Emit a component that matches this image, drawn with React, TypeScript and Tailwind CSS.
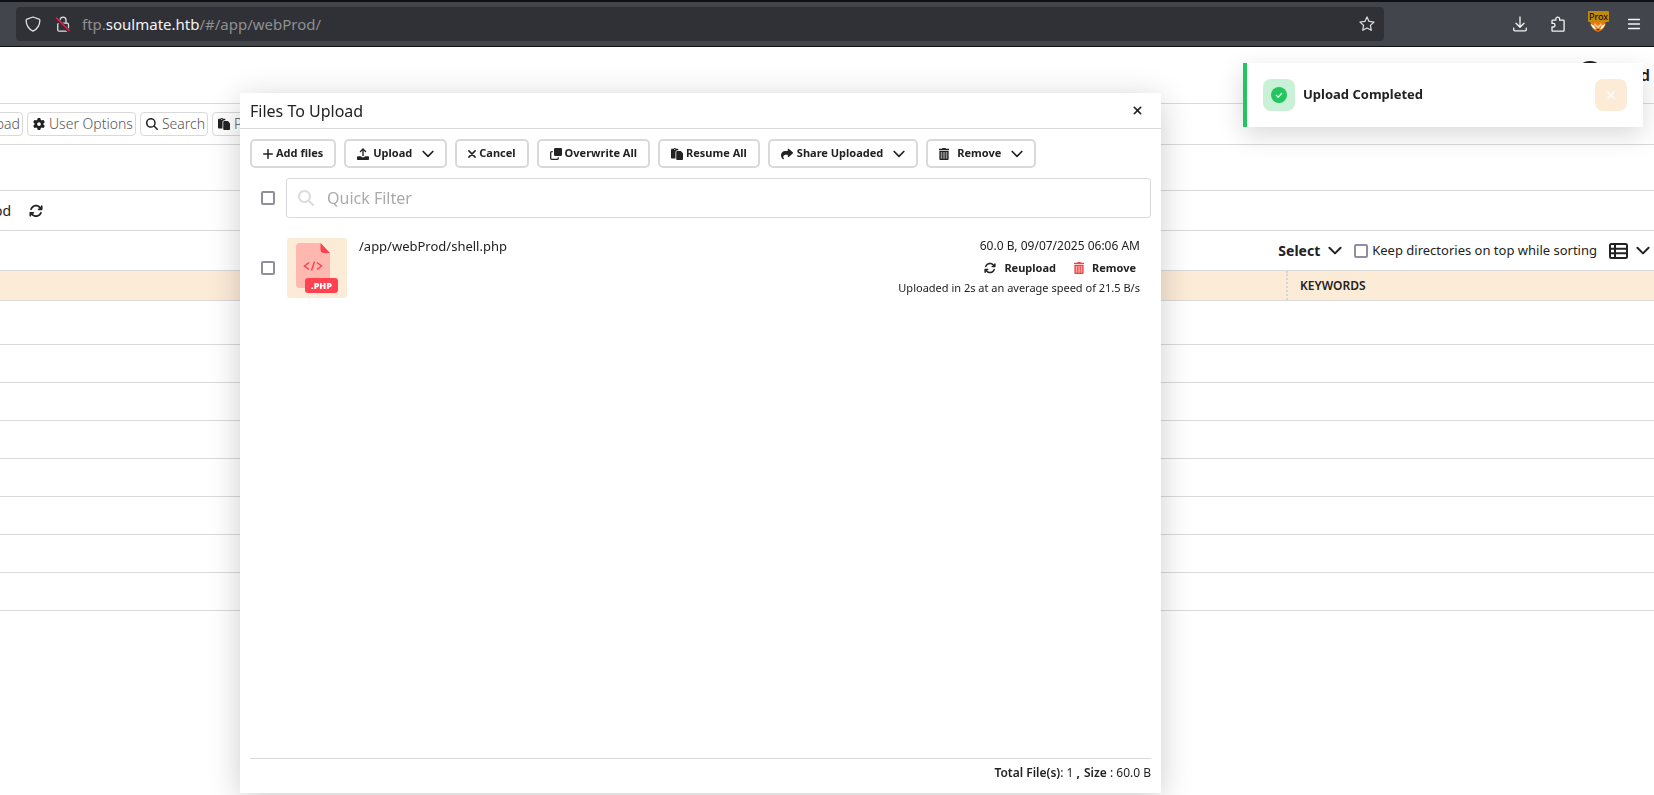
import type { ReactNode } from "react";
import {
  FaArrowsRotate,
  FaCircleUser,
  FaGear,
  FaMagnifyingGlass,
  FaPaste,
  FaShare,
  FaXmark,
} from "react-icons/fa6";

function ShieldIcon() {
  return (
    <svg className="size-4" viewBox="0 0 16 16" fill="none" stroke="#e0e0e4" strokeWidth="1.3" strokeLinejoin="round">
      <path d="M8 1 2 3.2c-.5.2-.9.6-.9 1.200C1.300 9 3.300 13 8 15.200c4.700-2.200 6.700-6.200 6.900-10.800 0-.6-.4-1-.9-1.200L8 1z" />
    </svg>
  );
}

function InsecureIcon() {
  return (
    <svg className="size-4" viewBox="0 0 16 16" fill="none" strokeWidth="1.3">
      <path d="M5 7.200V4.200a3 3 0 0 1 6 0v3" stroke="#e0e0e4" />
      <rect x="2.700" y="7.200" width="10.800" height="8" rx="1.500" stroke="#e0e0e4" />
      <path d="M1 2.500 14.500 15.500" stroke="#303136" strokeWidth="3.500" />
      <path d="M1 1.500 14.500 15" stroke="#f0184c" strokeWidth="1.400" />
    </svg>
  );
}

function StarIcon() {
  return (
    <svg className="size-4" viewBox="0 0 16 16" fill="none" stroke="#e0e0e4" strokeWidth="1.2" strokeLinejoin="round">
      <path d="m8 .9 2.100 4.500 4.900.6-3.600 3.400.9 4.900L8 12l-4.300 2.300.9-4.900L1 6l4.900-.6z" />
    </svg>
  );
}

function DownloadIcon() {
  return (
    <svg className="size-4" viewBox="0 0 16 16" fill="none" stroke="#f4f4f6" strokeWidth="1.3" strokeLinecap="round" strokeLinejoin="round">
      <path d="M8 1v10M4 7.200 8 11.200l4-4M1.700 12.200v1.300c0 .8.5 1.300 1.300 1.300h10c.8 0 1.300-.5 1.300-1.300v-1.300" />
    </svg>
  );
}

function ExtensionIcon() {
  return (
    <svg className="size-4" viewBox="0 0 16 16" fill="none" stroke="#f4f4f6" strokeWidth="1.3" strokeLinejoin="round">
      <path d="M2 6.200V4.900c0-.4.3-.7.700-.7h3.100V3a1.900 1.900 0 0 1 3.800 0v1.200h3.800c.4 0 .7.300.7.700v9.600c0 .4-.3.700-.7.700H2.700c-.4 0-.7-.3-.7-.7V11h1.200a1.800 1.800 0 0 0 0-3.600H2z" />
    </svg>
  );
}

function MenuIcon() {
  return (
    <svg className="size-4" viewBox="0 0 16 16" fill="none" stroke="#f4f4f6" strokeWidth="1.300" strokeLinecap="round">
      <path d="M2.500 3.500h11M2.500 8h11M2.500 12.500h11" />
    </svg>
  );
}

function FoxIcon() {
  return (
    <svg className="size-4" viewBox="0 0 16 16">
      <path d="M0 4h16l-1 6-3 4-4 2-4-2-3-4z" fill="#e87b0c" />
      <path d="M.5 8 4 9.500l2 4-3-1.500zM15.500 8 12 9.500l-2 4 3-1.500z" fill="#fff" />
      <path d="M5 7l3 3 3-3 1 2-4 3.500L4 9z" fill="#f6c48a" />
      <path d="M6.500 13h3L8 15z" fill="#5b2b05" />
    </svg>
  );
}

function Chevron({ className = "w-3" }: { className?: string }) {
  return (
    <svg className={className} viewBox="0 0 12 8" fill="none" stroke="currentColor" strokeWidth="1.700" strokeLinecap="round" strokeLinejoin="round">
      <path d="M1.200 1.500 6 6.300l4.800-4.800" />
    </svg>
  );
}

function PlusIcon() {
  return (
    <svg className="size-[10px]" viewBox="0 0 10 10" fill="none" stroke="currentColor" strokeWidth="1.500" strokeLinecap="round">
      <path d="M5 .7v8.600M.7 5h8.600" />
    </svg>
  );
}

function CrossIcon() {
  return (
    <svg className="size-2" viewBox="0 0 8 8" fill="none" stroke="currentColor" strokeWidth="1.500" strokeLinecap="round">
      <path d="m.9.9 6.200 6.200M7.100.9.900 7.100" />
    </svg>
  );
}

function UploadIcon() {
  return (
    <svg className="size-3" viewBox="0 0 12 12" fill="currentColor">
      <path d="M6 0 2.600 3.500l.9.900 1.800-1.800V8h1.400V2.600l1.800 1.800.9-.9z" />
      <path d="M1 8.200h3.300v.5c0 .3.200.5.500.5h2.400c.3 0 .5-.2.500-.5v-.5H11c.6 0 1 .4 1 1v1.800c0 .6-.4 1-1 1H1c-.6 0-1-.4-1-1V9.200c0-.6.4-1 1-1z" />
    </svg>
  );
}

function OverwriteIcon() {
  return (
    <svg className="size-3" viewBox="0 0 12 12" fill="none">
      <rect x="4" y="0" width="8" height="8" rx="1.300" fill="currentColor" />
      <path d="M2.800 3.700H1.700a1 1 0 0 0-1 1v5.600a1 1 0 0 0 1 1h5.600a1 1 0 0 0 1-1V9.200" stroke="currentColor" strokeWidth="1.300" />
    </svg>
  );
}

function TrashIcon({ className = "" }: { className?: string }) {
  return (
    <svg className={`h-3 w-[10px] ${className}`} viewBox="0 0 10 12" fill="currentColor">
      <path d="M3.300 0h3.400v.8H10v1.500H0V.8h3.300z" />
      <path d="M.5 3h9v8c0 .6-.4 1-1 1h-7c-.6 0-1-.4-1-1z" opacity=".5" />
      <path d="M.5 3h1.200v9H1.500c-.6 0-1-.4-1-1zM8.300 3h1.200v8c0 .6-.4 1-1 1h-.2zM1.500 10.800h7V12h-7zM.5 3h9v1h-9zM3.300 4h.9v7h-.9zM5.800 4h.9v7h-.9z" />
    </svg>
  );
}

function ListIcon() {
  return (
    <svg className="h-4 w-[19px]" viewBox="0 0 19 16" fill="none" stroke="currentColor" strokeWidth="2">
      <rect x="1" y="1" width="17" height="14" rx="1.500" />
      <path d="M1 5.700h17M1 10.300h17M6 1v14" />
    </svg>
  );
}

function PhpFileIcon() {
  return (
    <svg className="size-[60px] shrink-0 rounded-[3px] bg-[#fcebd7]" viewBox="0 0 60 60" role="img" aria-label="PHP file">
      <path d="M13 5h20.500L43 15v30a5 5 0 0 1-5 5H13a4 4 0 0 1-4-4V9a4 4 0 0 1 4-4z" fill="#ffb8b0" />
      <path d="M33.500 5 43 15h-6a3.500 3.500 0 0 1-3.500-3.500z" fill="#ff4150" />
      <path d="m22 24.500-4.500 3.500 4.500 3.500M30 24.500l4.500 3.500-4.500 3.500M27.500 23.500l-3 9" fill="none" stroke="#ff4150" strokeWidth="1.500" />
      <rect x="18" y="40" width="33" height="15" rx="3" fill="#ff4150" />
      <text x="34.500" y="51" textAnchor="middle" fontSize="9" fontWeight="800" fill="#fff" fontFamily="Open Sans, Noto Sans, sans-serif">
        .PHP
      </text>
    </svg>
  );
}

function Checkbox({ id, label }: { id: string; label?: string }) {
  return (
    <input
      id={id}
      type="checkbox"
      aria-label={label}
      className="size-[14px] shrink-0 appearance-none rounded-[2px] border-2 border-[#8f8f9d] bg-white checked:bg-[#8f8f9d]"
    />
  );
}

function BrowserBar() {
  return (
    <header className="flex h-[47px] items-center border-t-2 border-b border-[#0f1014] bg-[#42454c] pr-3 pl-4">
      <div className="flex h-[34px] flex-1 items-center rounded-[4px] bg-[#303136] px-[9px]">
        <ShieldIcon />
        <span className="ml-[14px]">
          <InsecureIcon />
        </span>
        <a href="#/app/webProd/" className="ml-[11px] flex-1 text-[15px] text-[#8f8f93]">
          ftp.<span className="text-[#f4f4f6]">soulmate.htb</span>/#/app/webProd/
        </a>
        <button type="button" aria-label="Bookmark">
          <StarIcon />
        </button>
      </div>
      <div className="ml-32 flex items-center gap-[22px]">
        <button type="button" aria-label="Downloads">
          <DownloadIcon />
        </button>
        <button type="button" aria-label="Extensions">
          <ExtensionIcon />
        </button>
        <button type="button" aria-label="Proxy" className="relative w-5 pl-0.5">
          <FoxIcon />
          <span className="absolute -top-[5px] left-0 rounded-[1px] bg-[#c08a0a] px-px text-[9px] leading-[11px] text-black">
            Prox
          </span>
        </button>
        <button type="button" aria-label="Menu" className="-ml-1">
          <MenuIcon />
        </button>
      </div>
    </header>
  );
}

function PageButton({ icon, children }: { icon: ReactNode; children: ReactNode }) {
  return (
    <button
      type="button"
      className="flex h-6 shrink-0 items-center gap-1 rounded-[4px] border border-[#d9d9d9] pr-0.5 pl-[5px] text-sm font-light whitespace-nowrap text-[#555]"
    >
      <span className="text-xs text-[#222]">{icon}</span>
      {children}
    </button>
  );
}

function Page() {
  return (
    <main className="overflow-hidden">
      <div className="flex h-[57px] items-center justify-end border-b border-[#d9d9d9] pr-1 text-base font-semibold">
        <FaCircleUser className="mr-9 size-7" />
        d
      </div>
      <nav className="flex h-[41px] items-center gap-1 border-b border-[#d9d9d9]">
        <div className="flex w-[23px] justify-end">
          <PageButton icon={<UploadIcon />}>Upload</PageButton>
        </div>
        <PageButton icon={<FaGear />}>User Options</PageButton>
        <PageButton icon={<FaMagnifyingGlass />}>Search</PageButton>
        <PageButton icon={<FaPaste />}>Paste</PageButton>
      </nav>
      <div className="h-[46px] border-b border-[#d9d9d9]" />
      <div className="flex h-10 items-center gap-[18px] border-b border-[#d9d9d9] text-sm">
        <span className="flex w-[11px] justify-end">webProd</span>
        <button type="button" aria-label="Refresh">
          <FaArrowsRotate className="size-[14px]" />
        </button>
      </div>
      <div className="flex h-[39px] items-center justify-end pr-1 text-sm">
        <button type="button" className="flex items-center gap-2 font-bold">
          Select <Chevron className="w-[14px]" />
        </button>
        <div className="ml-3 flex items-center gap-1">
          <Checkbox id="keep-top" />
          <label htmlFor="keep-top" className="text-[13px]">
            Keep directories on top while sorting
          </label>
        </div>
        <button type="button" aria-label="View" className="ml-3 flex items-center gap-2">
          <ListIcon />
          <Chevron className="w-[14px]" />
        </button>
      </div>
      <table className="w-full table-fixed">
        <thead>
          <tr className="h-[30px] border-y border-[#d9d9d9] bg-[#fcebd7]">
            <td />
            <th scope="col" className="w-[368px] p-0 text-left text-xs font-semibold">
              <div className="flex h-[29px] items-center border-l-2 border-dotted border-[#d3d5da] pl-3">KEYWORDS</div>
            </th>
          </tr>
        </thead>
        <tbody>
          <tr className="h-[44px] border-b border-[#d9d9d9]">
            <td colSpan={2} />
          </tr>
          {Array.from({ length: 7 }, (_, i) => (
            <tr key={i} className="h-[38px] border-b border-[#d9d9d9]">
              <td colSpan={2} />
            </tr>
          ))}
        </tbody>
      </table>
    </main>
  );
}

function ToolButton({ icon, children, menu, wide }: { icon: ReactNode; children: ReactNode; menu?: boolean; wide?: boolean }) {
  return (
    <button
      type="button"
      className="flex h-[29px] items-center rounded-[5px] border-2 border-[#d9d9d9] px-[11px] text-[11px] font-bold whitespace-nowrap"
    >
      <span className={wide ? "mr-2 text-xs" : menu ? "mr-1 text-xs" : "mr-[3px] text-xs"}>{icon}</span>
      {children}
      {menu && <Chevron className="ml-[10px] w-3" />}
    </button>
  );
}

function UploadDialog() {
  return (
    <section
      role="dialog"
      aria-labelledby="dialog-title"
      className="fixed top-[93px] right-[493px] bottom-0.5 left-60 flex flex-col bg-white shadow-[0_6px_30px_rgba(0,0,0,0.2)]"
    >
      <div className="flex h-9 shrink-0 items-center justify-between border-b border-[#d9d9d9] pr-[17px] pl-[10px]">
        <h1 id="dialog-title" className="text-base leading-5">
          Files To Upload
        </h1>
        <button type="button" aria-label="Close">
          <FaXmark className="size-[13px]" />
        </button>
      </div>
      <div className="flex flex-1 flex-col px-[10px] pt-[10px]">
        <div className="flex flex-wrap gap-2">
          <ToolButton icon={<PlusIcon />}>Add files</ToolButton>
          <ToolButton icon={<UploadIcon />} menu>
            Upload
          </ToolButton>
          <ToolButton icon={<CrossIcon />}>Cancel</ToolButton>
          <ToolButton icon={<OverwriteIcon />}>Overwrite All</ToolButton>
          <ToolButton icon={<FaPaste />}>Resume All</ToolButton>
          <ToolButton icon={<FaShare />} menu>
            Share Uploaded
          </ToolButton>
          <ToolButton icon={<TrashIcon />} menu wide>
            Remove
          </ToolButton>
        </div>
        <div className="mt-[10px] flex items-center gap-[11px] pl-[11px]">
          <Checkbox id="select-all" label="Select all files" />
          <div className="relative flex-1">
            <FaMagnifyingGlass className="absolute top-3 left-3 size-4 text-[#dcdcdc]" />
            <input
              type="text"
              aria-label="Quick Filter"
              placeholder="Quick Filter"
              className="h-10 w-full rounded-[3px] border border-[#d9d9d9] pr-3 pl-10 text-base placeholder:text-[#aaa]"
            />
          </div>
        </div>
        <div className="mt-[18px] flex items-center px-[11px]">
          <Checkbox id="select-shell" label="Select shell.php" />
          <div className="ml-3">
            <PhpFileIcon />
          </div>
          <p className="ml-3 self-start text-[13px] leading-5">/app/webProd/shell.php</p>
          <div className="ml-auto flex flex-col items-end pb-1 text-[11px]">
            <p className="text-xs leading-5">60.0 B, 09/07/2025 06:06 AM</p>
            <div className="flex h-6 items-center gap-[18px] pr-1 font-bold">
              <button type="button" className="flex items-center gap-2">
                <FaArrowsRotate className="size-3" />
                Reupload
              </button>
              <button type="button" className="flex items-center gap-2">
                <TrashIcon className="text-[#ef4444]" />
                Remove
              </button>
            </div>
            <p className="leading-4">Uploaded in 2s at an average speed of 21.5 B/s</p>
          </div>
        </div>
        <div className="mt-auto flex h-[35px] justify-end gap-1 border-t border-[#d9d9d9] pt-1.5 text-xs">
          <span>
            <b className="font-semibold">Total File(s)</b>: 1 <b>,</b>
          </span>
          <span>
            <b className="font-semibold">Size</b> : 60.0 B
          </span>
        </div>
      </div>
    </section>
  );
}

function Toast() {
  return (
    <div
      role="status"
      className="fixed top-[63px] right-[11px] flex h-16 w-[400px] items-center border-l-4 border-[#22c55e] bg-white px-4 shadow-[0_8px_26px_rgba(0,0,0,0.15)]"
    >
      <span className="flex size-8 items-center justify-center rounded-lg bg-[#c9f1d8]">
        <svg className="size-4" viewBox="0 0 16 16" fill="none">
          <circle cx="8" cy="8" r="8" fill="#22c55e" />
          <path d="m5 8 2.200 2.200L11 6" stroke="#d9f7e4" strokeWidth="1.400" />
        </svg>
      </span>
      <span className="ml-2 text-[13px] font-bold">Upload Completed</span>
      <button type="button" aria-label="Dismiss" className="ml-auto flex size-8 items-center justify-center rounded-lg bg-[#fcebd7] text-white">
        <FaXmark className="size-3" />
      </button>
    </div>
  );
}

export default function App() {
  return (
    <div className="min-h-screen bg-white font-['Noto_Sans',sans-serif] text-[#222]">
      <BrowserBar />
      <Page />
      <UploadDialog />
      <Toast />
    </div>
  );
}
